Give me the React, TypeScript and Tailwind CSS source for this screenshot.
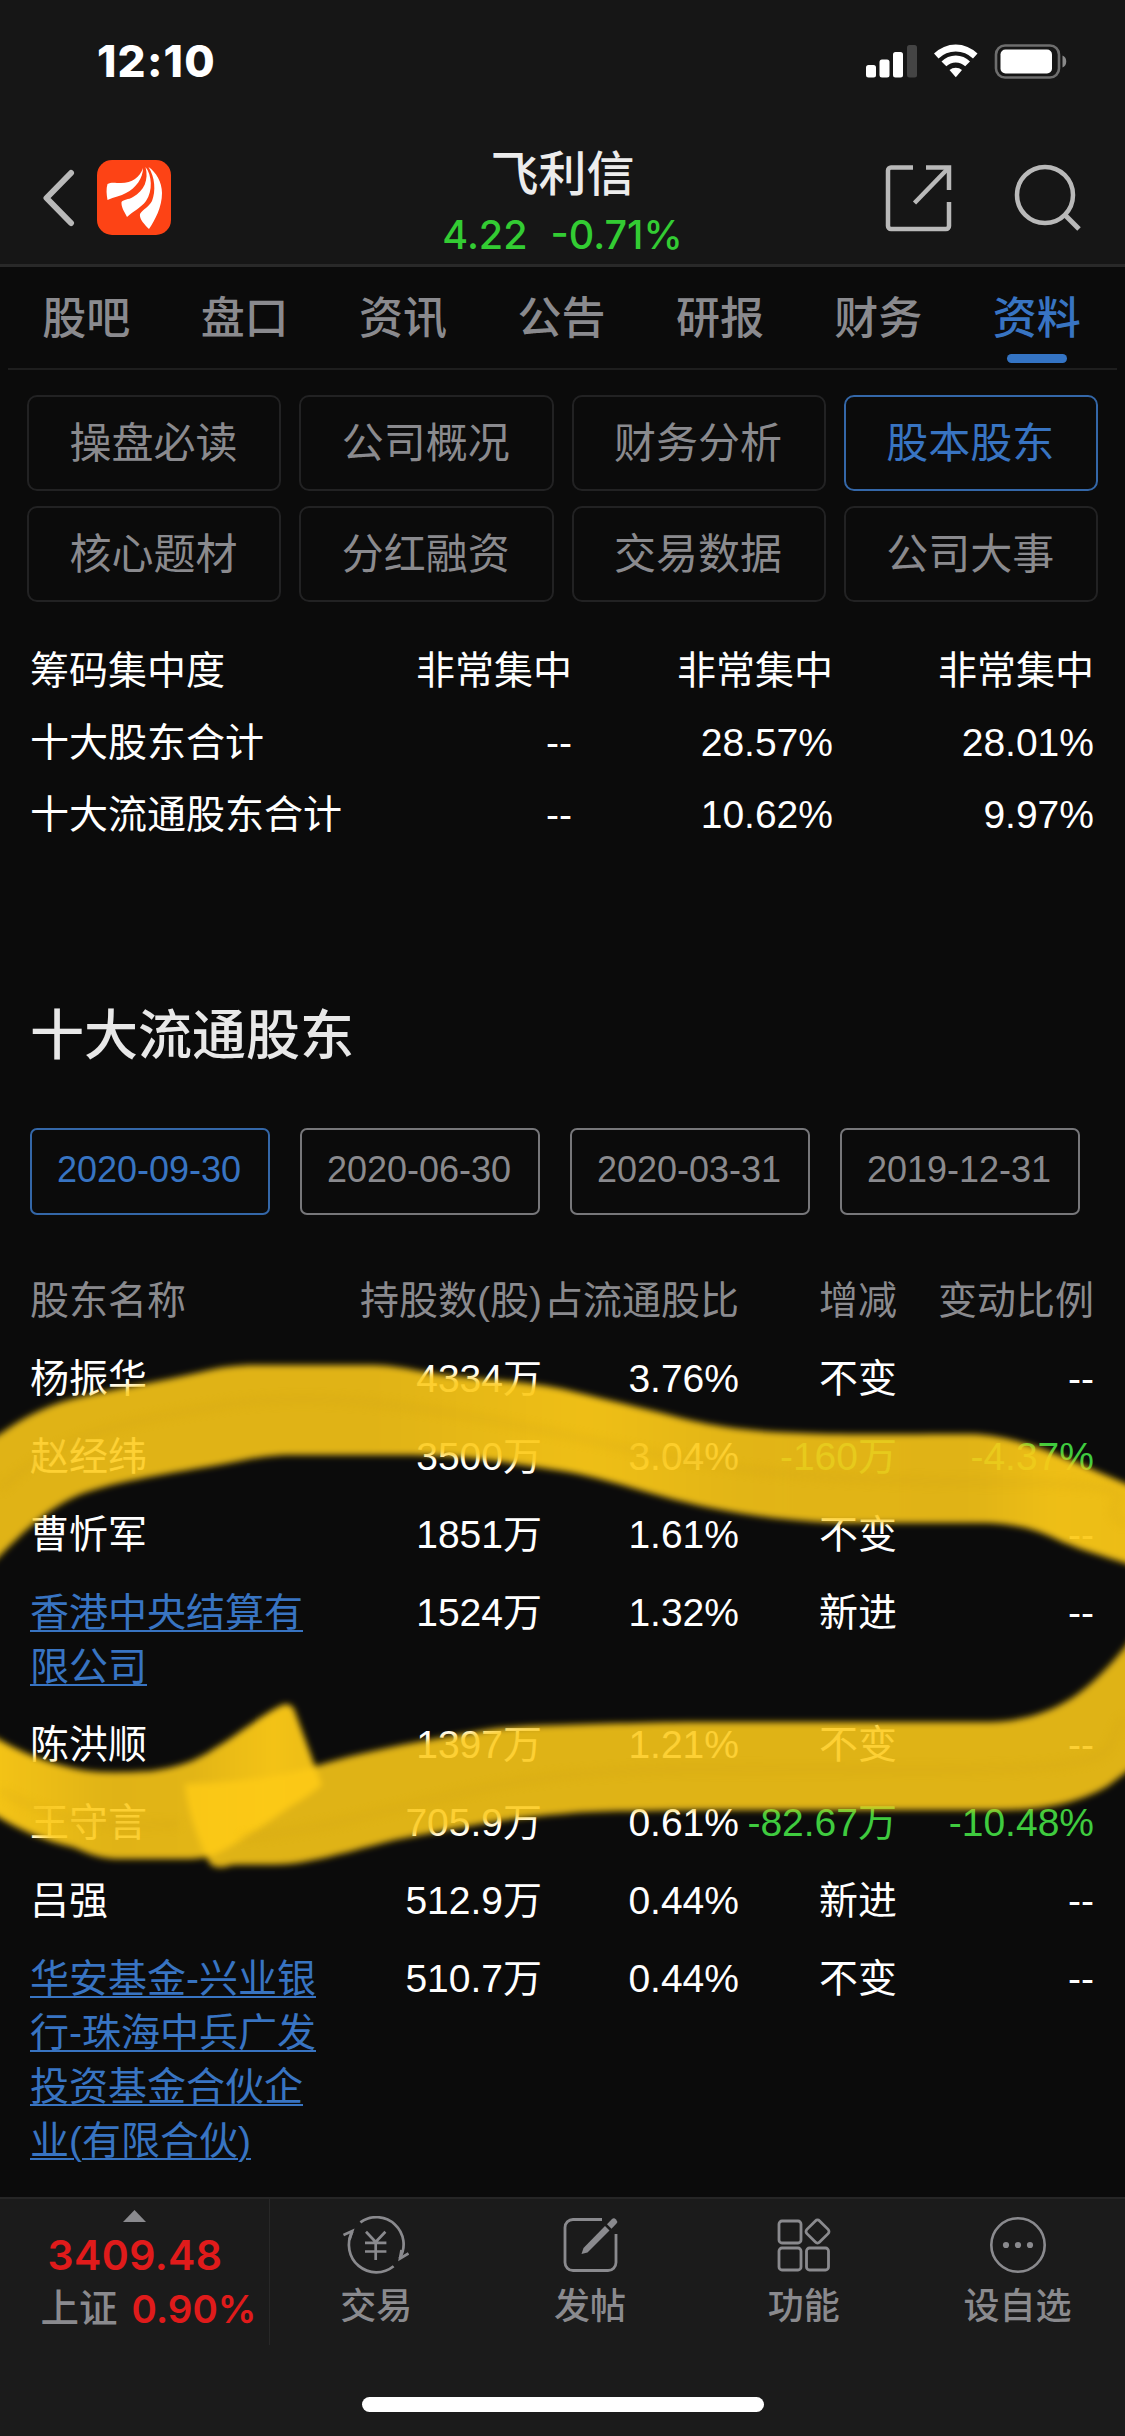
import { useId } from "react"

const TABS = ["股吧", "盘口", "资讯", "公告", "研报", "财务", "资料"]

const SECTIONS = [
  "操盘必读",
  "公司概况",
  "财务分析",
  "股本股东",
  "核心题材",
  "分红融资",
  "交易数据",
  "公司大事",
]

const SUMMARY = [
  ["筹码集中度", "非常集中", "非常集中", "非常集中"],
  ["十大股东合计", "--", "28.57%", "28.01%"],
  ["十大流通股东合计", "--", "10.62%", "9.97%"],
]

const DATES = ["2020-09-30", "2020-06-30", "2020-03-31", "2019-12-31"]

type Holder = {
  name: string[]
  shares: string
  ratio: string
  change: string
  percent: string
  link?: boolean
  down?: boolean
}

const HOLDERS: Holder[] = [
  { name: ["杨振华"], shares: "4334万", ratio: "3.76%", change: "不变", percent: "--" },
  { name: ["赵经纬"], shares: "3500万", ratio: "3.04%", change: "-160万", percent: "-4.37%", down: true },
  { name: ["曹忻军"], shares: "1851万", ratio: "1.61%", change: "不变", percent: "--" },
  { name: ["香港中央结算有", "限公司"], shares: "1524万", ratio: "1.32%", change: "新进", percent: "--", link: true },
  { name: ["陈洪顺"], shares: "1397万", ratio: "1.21%", change: "不变", percent: "--" },
  { name: ["王守言"], shares: "705.9万", ratio: "0.61%", change: "-82.67万", percent: "-10.48%", down: true },
  { name: ["吕强"], shares: "512.9万", ratio: "0.44%", change: "新进", percent: "--" },
  {
    name: ["华安基金-兴业银", "行-珠海中兵广发", "投资基金合伙企", "业(有限合伙)"],
    shares: "510.7万",
    ratio: "0.44%",
    change: "不变",
    percent: "--",
    link: true,
  },
]

const GRID = "grid grid-cols-[312px_200px_197px_158px_197px]"

function StatusBar() {
  return (
    <div className="flex h-[124px] items-start justify-between pt-[35px] pr-[57px] pl-[97px]">
      <span className="font-['Inter',sans-serif] text-[44px] leading-[53px] font-extrabold tracking-[1.2px] text-white">
        12:10
      </span>

      <svg width="202" height="36" viewBox="0 0 202 36" className="mt-2" fill="#fff">
        <rect x="0" y="22" width="10" height="12.5" rx="2.5" />
        <rect x="13.5" y="16.5" width="10" height="18" rx="2.5" />
        <rect x="27" y="9" width="10" height="25.5" rx="2.5" />
        <rect x="41" y="2" width="10" height="32.5" rx="2.5" fill="#444" />

        {/* wifi */}
        <path d="M68 10.5a31 31 0 0 1 43.5 0l-4.5 5a24.5 24.5 0 0 0-34.5 0z" />
        <path d="M75.5 18.5a20 20 0 0 1 28.5 0l-4.8 4.8a13.5 13.5 0 0 0-18.9 0z" />
        <path d="M83.5 27a9.5 9.5 0 0 1 12.5 0l-6.2 7.3z" />

        {/* battery */}
        <rect x="130" y="2.5" width="63" height="32" rx="9" fill="none" stroke="#6e6e6e" strokeWidth="2.6" />
        <rect x="134.5" y="6.5" width="51.5" height="24" rx="5" />
        <path d="M196.5 12.5c5 1.5 5 10.5 0 12z" fill="#8a8a8a" />
      </svg>
    </div>
  )
}

function AppLogo() {
  return (
    <svg width="74" height="75" viewBox="0 0 74 75" className="ml-[22px]">
      <rect width="74" height="75" rx="15" fill="#fd4315" />
      <g fill="#fff">
        <path d="M46 8C43 17 35 23 24 23C18 23 14 22 10.5 24C9 29 9.5 34 10.5 40C17 37 24 36 29 33C39 28 46 18 46 8Z" />
        <path d="M48.5 7C52 20 47 31 36 37C31 40 27 39 24.5 42C24 47 27 51 30 57C36 51 44 48 49 41C56 31 55 15 48.5 7Z" />
        <path d="M51.5 7C58 17 59 31 55 41C52 47 46 49 43 54C42 59 48 65 52 69C58 60 65 47 65 33C65 22 59 12 51.5 7Z" />
      </g>
    </svg>
  )
}

function Header() {
  return (
    <header className="h-[267px] border-b-[3px] border-[#292929] bg-[#161616]">
      <StatusBar />

      <div className="grid grid-cols-[300px_1fr_300px]">
        <div className="flex items-start pt-9 pl-[42px]">
          <svg width="33" height="75" viewBox="0 0 33 75" fill="none">
            <path d="M29 13L4.5 38L29 63" stroke="#b9b9b9" strokeWidth="6" strokeLinecap="round" strokeLinejoin="round" />
          </svg>
          <AppLogo />
        </div>

        <div className="flex flex-col items-center pt-[16px]">
          <h1 className="font-['Noto_Sans_CJK_SC',sans-serif] text-[48px] leading-[60px] font-medium text-[#ececec]">
            飞利信
          </h1>
          <p className="mt-[11px] flex gap-[23px] font-['Inter',sans-serif] text-[39.5px] leading-[48px] font-medium text-[#33cc33]">
            <span>4.22</span>
            <span>-0.71%</span>
          </p>
        </div>

        <div className="flex justify-end gap-[61px] pt-[40px] pr-[44px]">
          <svg width="68" height="68" viewBox="0 0 68 68" fill="none" stroke="#b9b9b9" strokeWidth="4.5">
            <path d="M29 3.5H7a3 3 0 0 0-3 3V62a3 3 0 0 0 3 3H62a3 3 0 0 0 3-3V38" />
            <path d="M42 3.5H65V26" />
            <path d="M64.5 4L30.5 39" />
          </svg>
          <svg width="68" height="72" viewBox="0 0 68 72" fill="none" stroke="#b9b9b9" strokeWidth="4.5">
            <ellipse cx="32" cy="31" rx="28" ry="28" />
            <path d="M51 50L66 65" strokeWidth="5" />
          </svg>
        </div>
      </div>
    </header>
  )
}

function TabBar() {
  return (
    <nav className="mx-2 flex h-[103px] border-b-2 border-[#1e1e1e]">
      {TABS.map((tab) => {
        const active = tab === "资料"
        return (
          <div key={tab} className="flex flex-1 flex-col items-center pt-[22px] pr-[2px]">
            <span
              className={`text-[44px] leading-[60px] font-medium ${active ? "text-[#3874c2]" : "text-[#8a8a8e]"}`}
            >
              {tab}
            </span>
            {active && <span className="mt-[5px] h-[9px] w-[60px] rounded-full bg-[#3474c4]" />}
          </div>
        )
      })}
    </nav>
  )
}

function SectionGrid() {
  return (
    <div className="grid grid-cols-4 gap-x-[18px] gap-y-[15px] px-[27px] pt-[25px]">
      {SECTIONS.map((label) => (
        <button
          key={label}
          className={`flex h-24 items-center justify-center rounded-[10px] border-2 pt-[2px] pr-px text-[42px] leading-none ${
            label === "股本股东" ? "border-[#3467a8] text-[#3874c2]" : "border-[#222223] text-[#8a8a8e]"
          }`}
        >
          {label}
        </button>
      ))}
    </div>
  )
}

function Summary() {
  return (
    <div className="pt-[33px] pl-[30px] text-white">
      {SUMMARY.map(([label, ...values]) => (
        <div key={label} className="grid h-[72px] grid-cols-[311px_231px_261px_261px] items-center">
          <span className="whitespace-nowrap">{label}</span>
          {values.map((value, i) => (
            <span key={i} className="text-right">
              {value}
            </span>
          ))}
        </div>
      ))}
    </div>
  )
}

function Holders() {
  return (
    <section className="px-[30px]">
      <h2 className="pt-[145px] text-[54px] leading-[80px] font-medium text-[#e8e8e8]">十大流通股东</h2>

      <div className="flex gap-[30px] pt-[52px]">
        {DATES.map((date, i) => (
          <button
            key={date}
            className={`flex h-[87px] w-[240px] items-center justify-center rounded-[7px] border-2 pr-[2px] pb-[3px] text-[36px] ${
              i === 0 ? "border-[#3467a8] text-[#3874c2]" : "border-[#77777a] text-[#8a8a8e]"
            }`}
          >
            {date}
          </button>
        ))}
      </div>

      <div className={`${GRID} mt-[47px] py-3 text-right whitespace-nowrap text-[#8a8a8e]`}>
        <span className="text-left">股东名称</span>
        <span>持股数(股)</span>
        <span>占流通股比</span>
        <span>增减</span>
        <span>变动比例</span>
      </div>

      {HOLDERS.map((row) => (
        <div key={row.name[0]} className={`${GRID} py-3 text-right whitespace-nowrap text-white`}>
          <div
            className={`text-left ${
              row.link ? "text-[#3874c2] underline decoration-2 underline-offset-[4px]" : ""
            }`}
          >
            {row.name.map((line) => (
              <p key={line}>{line}</p>
            ))}
          </div>
          <span>{row.shares}</span>
          <span>{row.ratio}</span>
          <span className={row.down ? "text-[#3fcb3f]" : ""}>{row.change}</span>
          <span className={row.down ? "text-[#3fcb3f]" : ""}>{row.percent}</span>
        </div>
      ))}
    </section>
  )
}

/* hand-drawn highlighter loop over the table */
function Marker() {
  const id = useId()
  return (
    <svg
      className="pointer-events-none absolute top-[1340px] left-0"
      width="1125"
      height="560"
      viewBox="0 1340 1125 560"
    >
      <defs>
        <filter id={`${id}soft`} x="-5%" y="-10%" width="110%" height="120%">
          <feGaussianBlur stdDeviation="3" />
        </filter>
        <filter id={`${id}streak`} x="-5%" y="-10%" width="110%" height="120%">
          <feGaussianBlur stdDeviation="4" />
        </filter>
        <linearGradient id={`${id}top`} gradientUnits="userSpaceOnUse" x1="0" y1="0" x2="1125" y2="0">
          <stop offset="0" stopColor="#fdca18" stopOpacity="0.88" />
          <stop offset="0.33" stopColor="#fdca18" stopOpacity="0.88" />
          <stop offset="0.52" stopColor="#fdca18" stopOpacity="0.94" />
          <stop offset="0.66" stopColor="#fdca18" stopOpacity="0.89" />
          <stop offset="0.86" stopColor="#fdca18" stopOpacity="0.88" />
          <stop offset="0.94" stopColor="#fdca18" stopOpacity="0.94" />
          <stop offset="1" stopColor="#fdca18" stopOpacity="0.93" />
        </linearGradient>
        <linearGradient id={`${id}tail`} gradientUnits="userSpaceOnUse" x1="0" y1="0" x2="320" y2="0">
          <stop offset="0" stopColor="#fdca18" stopOpacity="0.96" />
          <stop offset="0.35" stopColor="#fdca18" stopOpacity="0.88" />
          <stop offset="0.6" stopColor="#fdca18" stopOpacity="0.89" />
          <stop offset="0.85" stopColor="#fdca18" stopOpacity="0.96" />
          <stop offset="1" stopColor="#fdca18" stopOpacity="0.93" />
        </linearGradient>
      </defs>

      <g filter={`url(#${id}soft)`}>
        <path
          fill={`url(#${id}top)`}
          d="M-20 1447L0 1434C24 1417 46 1406 72 1399C110 1389 160 1382 201 1372C222 1367 235 1365 258 1365H373C400 1366 412 1370 431 1373C480 1380 520 1380 563 1389C600 1398 625 1404 662 1413C705 1425 740 1431 800 1433C830 1435 900 1434 971 1434C1000 1435 1030 1443 1065 1458C1090 1468 1110 1477 1145 1492V1570L1125 1563C1100 1555 1085 1551 1065 1543C1045 1534 1030 1525 986 1523H835C790 1521 750 1516 706 1507C650 1495 610 1479 562 1471C520 1465 480 1456 413 1455H287C255 1456 235 1463 201 1468C160 1475 110 1483 79 1495C50 1507 25 1530 0 1556L-20 1575Z"
        />
        <path
          fill="#fdca18"
          fillOpacity="0.88"
          d="M1145 1620L1125 1647C1108 1668 1090 1686 1072 1698C1040 1718 1010 1722 986 1722H706C650 1722 600 1724 562 1725C530 1726 510 1726 480 1731C420 1741 360 1752 316 1766C280 1777 240 1782 185 1784C187 1812 200 1844 210 1864C216 1869 224 1868 232 1865C255 1864 275 1866 298 1863C330 1858 370 1846 395 1840C440 1832 500 1818 563 1814C590 1811 620 1811 700 1810H1000C1040 1810 1075 1805 1108 1786L1145 1758Z"
        />
        <path
          fill={`url(#${id}tail)`}
          d="M-20 1729L0 1740C20 1751 36 1759 72 1768C95 1774 130 1772 151 1771C185 1766 200 1758 215 1748C237 1735 260 1716 280 1706C286 1703 291 1704 294 1709C301 1728 310 1752 322 1785C310 1795 298 1802 287 1809C265 1824 240 1842 222 1851C208 1859 195 1859 180 1859H115C95 1858 84 1851 72 1847C45 1841 20 1830 0 1818L-20 1806Z"
        />
      </g>

      {/* bristle streaks */}
      <g fill="none" stroke="#c79a08" strokeWidth="9" opacity="0.14" filter={`url(#${id}streak)`}>
        <path d="M0 1490C60 1430 130 1422 230 1404C320 1392 420 1404 560 1434S760 1480 980 1482S1080 1500 1125 1524" />
        <path d="M240 1838C340 1830 440 1790 560 1776S900 1774 1020 1768S1100 1740 1125 1718" />
        <path d="M0 1790C60 1824 110 1828 180 1824" />
      </g>
    </svg>
  )
}

function TradeIcon() {
  return (
    <svg width="66" height="60" viewBox="0 0 66 60" fill="none" stroke="#8a8a8e" strokeWidth="2.7">
      <path d="M17.4 6.4A27.2 27.2 0 0 1 56.600 42.600" />
      <path d="M58.5 34L57 42.5L65.5 37.5" />
      <path d="M50.600 50.300A27.500 27.500 0 0 1 9.300 15.600" />
      <path d="M6.5 23.5L9.3 15L0.5 19" />
      <path d="M23 15.7L32.7 26L42.4 15.7M32.7 26V44M22 26.8H43.4M22 35.5H43.4" />
    </svg>
  )
}

function PostIcon() {
  return (
    <svg width="58" height="60" viewBox="0 0 58 60" fill="none" stroke="#8a8a8e" strokeWidth="2.8">
      <path d="M41 3.5H12a8 8 0 0 0-8 8V46.5a8 8 0 0 0 8 8H47a8 8 0 0 0 8-8V18" />
      <path d="M44 10L48.5 14.5L26.5 36.5L20.5 38L22.5 32Z" fill="#8a8a8e" stroke="none" />
      <path d="M46 8.2L51 3Q53 1.5 55 3.5Q57 5.5 55.5 7.5L50.5 12.7Z" fill="#8a8a8e" stroke="none" />
    </svg>
  )
}

function FeatureIcon() {
  return (
    <svg width="54" height="60" viewBox="0 0 54 60" fill="none" stroke="#8a8a8e" strokeWidth="2.8">
      <rect x="2" y="5" width="22" height="22" rx="3" />
      <rect x="2" y="32" width="22" height="22" rx="3" />
      <rect x="29.5" y="32" width="22" height="22" rx="3" />
      <rect x="31.5" y="6.5" width="18" height="18" rx="3" transform="rotate(45 40.5 15.5)" />
    </svg>
  )
}

function MoreIcon() {
  return (
    <svg width="58" height="60" viewBox="0 0 58 60" fill="#8a8a8e">
      <circle cx="29" cy="29" r="26.7" fill="none" stroke="#8a8a8e" strokeWidth="2.6" />
      <circle cx="17" cy="29" r="3.1" />
      <circle cx="29" cy="29" r="3.1" />
      <circle cx="41" cy="29" r="3.1" />
    </svg>
  )
}

const ACTIONS = [
  { label: "交易", icon: <TradeIcon /> },
  { label: "发帖", icon: <PostIcon /> },
  { label: "功能", icon: <FeatureIcon /> },
  { label: "设自选", icon: <MoreIcon /> },
]

function BottomBar() {
  return (
    <footer className="flex h-[239px] shrink-0 flex-col border-t-2 border-[#262626] bg-[#1b1b1b]">
      <div className="flex h-[146px]">
        <div className="flex w-[270px] shrink-0 flex-col items-center border-r border-[#282828] pt-[11px]">
          <svg width="23" height="12" viewBox="0 0 23 12">
            <path d="M0 12L11.5 0L23 12Z" fill="#8a8a8e" />
          </svg>
          <p className="mt-[8px] pl-px font-['Inter',sans-serif] text-[41px] leading-[50px] font-semibold tracking-[0.4px] text-[#e01b1b]">
            3409.48
          </p>
          <p className="mt-[2px] flex items-center gap-[14px] pl-7 whitespace-nowrap">
            <span className="text-[38.5px] font-medium text-[#8a8a8e]">上证</span>
            <span className="font-['Inter',sans-serif] text-[38.5px] font-semibold text-[#e01b1b]">0.90%</span>
          </p>
        </div>

        {ACTIONS.map(({ label, icon }) => (
          <div key={label} className="flex flex-1 flex-col items-center pt-[17px] pr-px">
            {icon}
            <span className="mt-[6px] text-[36px] leading-[50px] font-medium text-[#8a8a8e]">{label}</span>
          </div>
        ))}
      </div>

      <div className="mx-auto mt-[52px] h-[15px] w-[402px] rounded-full bg-white" />
    </footer>
  )
}

export default function App() {
  return (
    <div className="relative flex h-[2436px] w-[1125px] flex-col overflow-hidden bg-[#0b0b0b] font-['Liberation_Sans','Noto_Sans_CJK_SC',sans-serif] text-[39px] leading-[54px]">
      <Header />
      <TabBar />

      <main className="min-h-0 flex-1">
        <SectionGrid />
        <Summary />
        <Holders />
      </main>

      <BottomBar />
      <Marker />
    </div>
  )
}
